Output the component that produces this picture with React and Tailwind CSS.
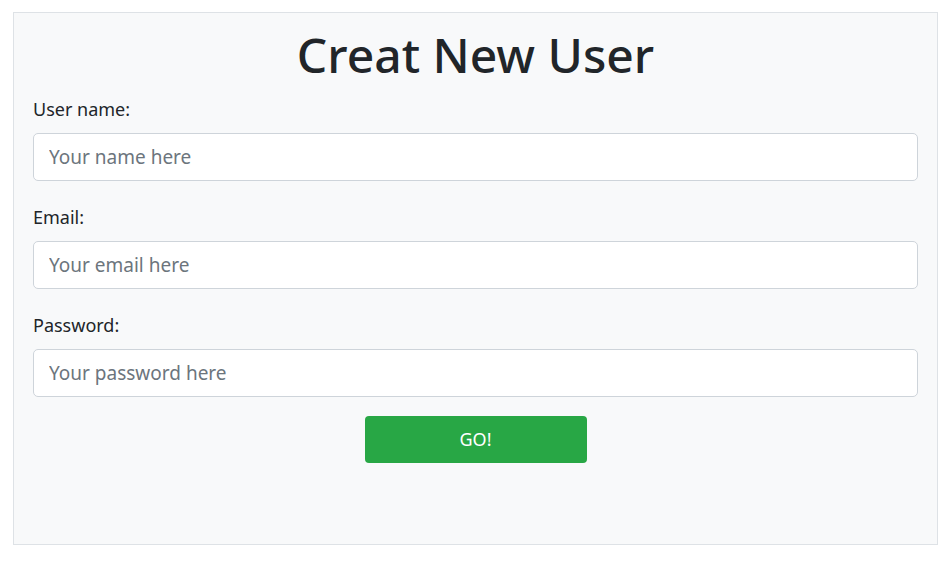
import React from 'react';

const fields = [
  { id: 'name', label: 'User name:', type: 'text', placeholder: 'Your name here' },
  { id: 'email', label: 'Email:', type: 'email', placeholder: 'Your email here' },
  { id: 'password', label: 'Password:', type: 'password', placeholder: 'Your password here' },
];

export default function App() {
  return (
    <div className="min-h-[576px] bg-white pl-[13px] pt-[12px] pr-[12px] font-['Noto_Sans','Open_Sans',sans-serif] text-[#212529]">
      {/* Card */}
      <div className="h-[533px] w-[925px] border border-[#dee2e6] bg-[#f8f9fa] px-[19px] pt-[13px]">
        <h1 className="text-center text-[48px] font-medium leading-[58px]">Creat New User</h1>

        <form className="mt-[12px]" onSubmit={e => e.preventDefault()}>
          {fields.map(f => (
            <div key={f.id} className="mb-[23px]">
              <label htmlFor={f.id} className="mb-[10px] block text-[18px] leading-[27px]">{f.label}</label>
              <input
                id={f.id}
                type={f.type}
                placeholder={f.placeholder}
                className="block h-[48px] w-full rounded-[5px] border border-[#ced4da] bg-white px-[15px] text-[19px] text-[#495057] placeholder:text-[#6c757d] outline-none"
              />
            </div>
          ))}

          <div className="flex justify-center">
            <button
              type="submit"
              className="-mt-[4px] h-[47px] w-[222px] rounded-[4px] bg-[#28a745] text-[18px] text-white"
            >
              GO!
            </button>
          </div>
        </form>
      </div>
    </div>
  );
}
